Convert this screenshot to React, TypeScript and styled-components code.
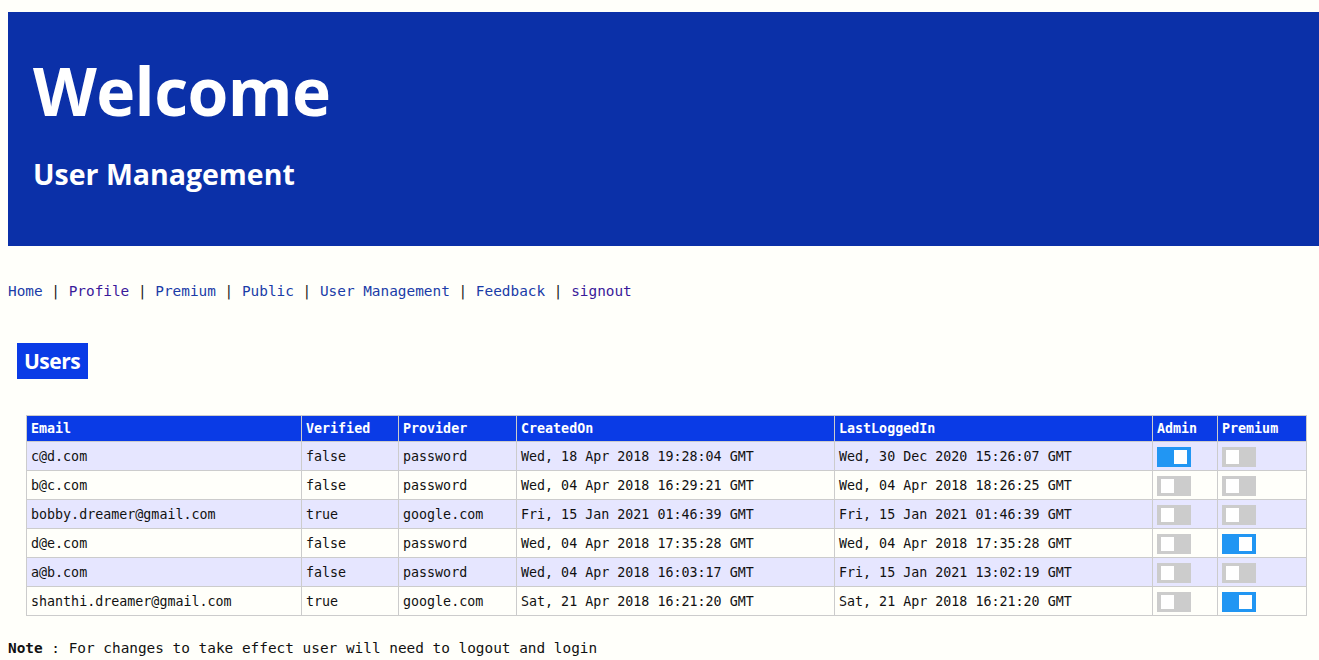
import React from "react";
import styled, { createGlobalStyle } from "styled-components";

const Global = createGlobalStyle`
  html, body { background: #fffffa; }
  body {
    margin: 12px 0 0 8px;
    font-family: "DejaVu Sans Mono", "Liberation Mono", monospace;
    color: #111;
    overflow-x: hidden;
  }
`;

const Header = styled.header`
  background: #0b30a8;
  color: #fff;
  height: 234px;
  box-sizing: border-box;
  padding: 38px 0 0 25px;
  font-family: "Open Sans", "Noto Sans", sans-serif;
`;

const Title = styled.h1`
  margin: 0;
  font-size: 66px;
  font-weight: 700;
  line-height: 80px;
  letter-spacing: -0.6px;
`;

const Subtitle = styled.h2`
  margin: 26px 0 0 0;
  font-size: 28.5px;
  font-weight: 700;
  line-height: 36px;
`;

const Nav = styled.nav`
  margin-top: 36px;
  font-size: 14.4px;
  line-height: 18px;
  color: #222;
`;

const NavLink = styled.a<{ $visited?: boolean }>`
  color: ${(p) => (p.$visited ? "#3a1a9a" : "#1a3ca8")};
  text-decoration: none;
`;

const Sep = styled.span`
  margin: 0 1ch;
`;

const Badge = styled.div`
  margin: 43px 0 0 9px;
  display: inline-block;
  background: #0a3be6;
  color: #fff;
  font-family: "Open Sans", "Noto Sans", sans-serif;
  font-weight: 700;
  font-size: 21px;
  line-height: 36px;
  padding: 0 7px 0 7px;
  width: 71px;
  box-sizing: border-box;
  letter-spacing: -0.5px;
`;

const Table = styled.table`
  margin: 36px 0 0 18px;
  width: 1280px;
  table-layout: fixed;
  border-collapse: collapse;
  font-size: 13.33px;
  border: 1px solid #ccc;
`;

const Th = styled.th`
  background: #0a3be6;
  color: #fff;
  text-align: left;
  font-weight: 700;
  height: 26px;
  padding: 0 4px;
  border: 1px solid #ccc;
  border-top: none;
  box-sizing: border-box;
`;

const Tr = styled.tr<{ $odd: boolean }>`
  background: ${(p) => (p.$odd ? "#e6e6ff" : "#fffffa")};
`;

const Td = styled.td`
  height: 29px;
  padding: 1px 4px 0;
  border: 1px solid #ccc;
  box-sizing: border-box;
  white-space: nowrap;
`;

const Switch = styled.span<{ $on: boolean }>`
  display: block;
  position: relative;
  width: 34px;
  height: 20px;
  background: ${(p) => (p.$on ? "#2196f3" : "#cccccc")};
  &::after {
    content: "";
    position: absolute;
    top: 3px;
    left: ${(p) => (p.$on ? "17px" : "4px")};
    width: 13px;
    height: 14px;
    background: #fff;
  }
`;

const Note = styled.p`
  margin: 23px 0 0 0;
  font-size: 14.4px;
  line-height: 18px;
`;

const users = [
  ["c@d.com", "false", "password", "Wed, 18 Apr 2018 19:28:04 GMT", "Wed, 30 Dec 2020 15:26:07 GMT", true, false],
  ["b@c.com", "false", "password", "Wed, 04 Apr 2018 16:29:21 GMT", "Wed, 04 Apr 2018 18:26:25 GMT", false, false],
  ["bobby.dreamer@gmail.com", "true", "google.com", "Fri, 15 Jan 2021 01:46:39 GMT", "Fri, 15 Jan 2021 01:46:39 GMT", false, false],
  ["d@e.com", "false", "password", "Wed, 04 Apr 2018 17:35:28 GMT", "Wed, 04 Apr 2018 17:35:28 GMT", false, true],
  ["a@b.com", "false", "password", "Wed, 04 Apr 2018 16:03:17 GMT", "Fri, 15 Jan 2021 13:02:19 GMT", false, false],
  ["shanthi.dreamer@gmail.com", "true", "google.com", "Sat, 21 Apr 2018 16:21:20 GMT", "Sat, 21 Apr 2018 16:21:20 GMT", false, true],
] as const;

const widths = [275, 97, 118, 318, 318, 65, 89];
const heads = ["Email", "Verified", "Provider", "CreatedOn", "LastLoggedIn", "Admin", "Premium"];
const links = ["Home", "Profile", "Premium", "Public", "User Management", "Feedback", "signout"];

export default function App() {
  return (
    <>
      <Global />
      <Header>
        <Title>Welcome</Title>
        <Subtitle>User Management</Subtitle>
      </Header>
      <Nav>
        {links.map((l, i) => (
          <React.Fragment key={l}>
            {i > 0 && <Sep>|</Sep>}
            <NavLink href="#" $visited={l === "signout" || l === "Profile"}>{l}</NavLink>
          </React.Fragment>
        ))}
      </Nav>
      <Badge>Users</Badge>
      <Table>
        <colgroup>
          {widths.map((w, i) => (
            <col key={i} style={{ width: w }} />
          ))}
        </colgroup>
        <thead>
          <tr>
            {heads.map((h) => (
              <Th key={h}>{h}</Th>
            ))}
          </tr>
        </thead>
        <tbody>
          {users.map((u, i) => (
            <Tr key={u[0]} $odd={i % 2 === 0}>
              <Td>{u[0]}</Td>
              <Td>{u[1]}</Td>
              <Td>{u[2]}</Td>
              <Td>{u[3]}</Td>
              <Td>{u[4]}</Td>
              <Td><Switch $on={u[5]} /></Td>
              <Td><Switch $on={u[6]} /></Td>
            </Tr>
          ))}
        </tbody>
      </Table>
      <Note>
        <b>Note</b> : For changes to take effect user will need to logout and login
      </Note>
    </>
  );
}
